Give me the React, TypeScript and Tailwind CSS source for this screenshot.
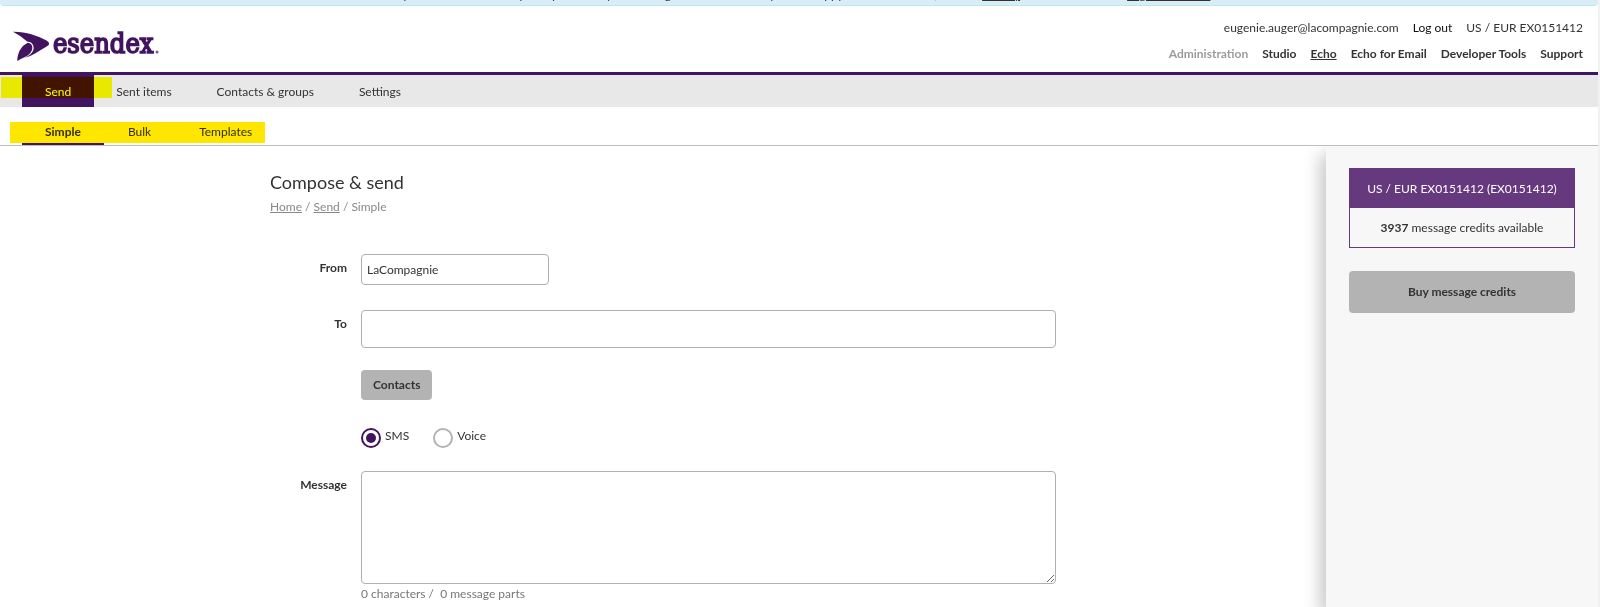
import { useState } from "react";

const accountLinks = [
  { label: "Administration", className: "text-[#9b9b9b]" },
  { label: "Studio", className: "" },
  { label: "Echo", className: "underline" },
  { label: "Echo for Email", className: "" },
  { label: "Developer Tools", className: "" },
  { label: "Support", className: "" },
];

function Logo() {
  return (
    <a href="#" aria-label="esendex" className="block">
      <svg width="148" height="36" viewBox="0 0 148 36" fill="#42145f">
        <path d="M0 1.700C13 1.500 24 5.500 33.500 10.500Q38.500 13.500 34 16.300L22 23.500Q17 26.500 11.500 28C18 25 21.500 21 20.500 16.500C19.800 13.500 17.500 11.500 14.500 11.800Q8.500 6 0 1.700Z" />
        <path d="M14.800 12.700C18 13 19.500 15.500 19.300 18C19 22 16.500 24.500 13 26.500Q7.500 29 4.300 31C4.300 25 6.500 16.500 14.800 12.700Z" />
        <text
          x="40"
          y="23"
          fontSize="27"
          stroke="#42145f"
          strokeWidth="1.600"
          fontFamily="'DejaVu Serif Condensed', 'DejaVu Serif', serif"
        >
          esendex
        </text>
        <circle cx="144" cy="22" r="1.500" opacity="0.7" />
      </svg>
    </a>
  );
}

function Header() {
  return (
    <header className="flex justify-between border-b-3 border-[#42145f] pl-[13px] pr-[15px]">
      <div className="pt-[24px]">
        <Logo />
      </div>
      <div className="flex flex-col items-end pt-[12px] pb-[8px]">
        <div className="flex h-[26px] gap-[14px] leading-[20px]">
          <span>eugenie.auger@lacompagnie.com</span>
          <a href="#" className="text-[#111]">Log out</a>
          <span>US / EUR EX0151412</span>
        </div>
        <nav className="flex gap-[14px] font-bold leading-[20px]">
          {accountLinks.map((link) => (
            <a key={link.label} href="#" className={link.className}>
              {link.label}
            </a>
          ))}
        </nav>
      </div>
    </header>
  );
}

function MainNav() {
  return (
    <nav className="relative flex h-[32px] bg-[#e8e8e8] pl-[22px] leading-[34px]">
      <a href="#" className="bg-[#42145f] px-[23px] text-white">Send</a>
      <a href="#" className="px-[22px]">Sent items</a>
      <a href="#" className="px-[23px]">Contacts &amp; groups</a>
      <a href="#" className="px-[22px]">Settings</a>
      <div className="absolute left-px top-[2px] h-[21px] w-[111px] bg-[#ffff00] mix-blend-multiply" />
    </nav>
  );
}

function SubNav() {
  return (
    <nav className="relative flex h-[39px] border-b border-[#bdbdbd] pl-[22px] pt-[10px] leading-[30px]">
      <a href="#" className="h-[28px] border-b-2 border-[#42145f] px-[23px] font-bold">Simple</a>
      <a href="#" className="px-[24px]">Bulk</a>
      <a href="#" className="px-[24px]">Templates</a>
      <div className="absolute left-[10px] top-[15px] h-[21px] w-[255px] bg-[#ffe600] mix-blend-multiply" />
    </nav>
  );
}

function Sidebar() {
  return (
    <aside className="w-[272px] shrink-0 bg-[#f7f7f7] px-[23px] pt-[22px] shadow-[-6px_8px_16px_rgba(0,0,0,0.22)]">
      <div className="border border-[#66397f] text-center">
        <div className="bg-[#66397f] leading-[39px] text-white">US / EUR EX0151412 (EX0151412)</div>
        <div className="leading-[39px]">
          <strong>3937</strong> message credits available
        </div>
      </div>
      <button className="mt-[23px] h-[42px] w-full rounded bg-[#b3b3b3] font-bold">
        Buy message credits
      </button>
    </aside>
  );
}

function ComposeForm() {
  const [from, setFrom] = useState("LaCompagnie");
  const [to, setTo] = useState("");
  const [type, setType] = useState("sms");
  const [message, setMessage] = useState("");

  const radio =
    "size-[20px] appearance-none rounded-full border-2 border-[#b3b3b3] p-[3px] checked:border-[#42145f] checked:bg-[#42145f] checked:bg-clip-content";
  const label = "text-right font-bold leading-[27px]";
  const field = "block rounded border border-[#b0b0b0] bg-white";

  return (
    <form className="grid grid-cols-[77px_1fr] gap-x-[14px] pt-[38px]">
      <label htmlFor="from" className={label}>From</label>
      <div className="h-[56px]">
        <input
          id="from"
          value={from}
          onChange={(e) => setFrom(e.target.value)}
          className={`${field} h-[31px] w-[188px] px-[5px]`}
        />
      </div>

      <label htmlFor="to" className={label}>To</label>
      <div>
        <input
          id="to"
          value={to}
          onChange={(e) => setTo(e.target.value)}
          className={`${field} h-[38px] w-full px-[5px]`}
        />
        <button type="button" className="mt-[22px] block h-[30px] rounded bg-[#b3b3b3] px-[12px] font-bold">
          Contacts
        </button>
        <div className="mt-[28px] flex h-[43px] gap-[24px]">
          <label className="flex items-start gap-[4px] leading-[16px]">
            <input type="radio" name="type" className={radio} checked={type === "sms"} onChange={() => setType("sms")} />
            SMS
          </label>
          <label className="flex items-start gap-[4px] leading-[16px]">
            <input type="radio" name="type" className={radio} checked={type === "voice"} onChange={() => setType("voice")} />
            Voice
          </label>
        </div>
      </div>

      <label htmlFor="message" className={label}>Message</label>
      <div>
        <textarea
          id="message"
          value={message}
          onChange={(e) => setMessage(e.target.value)}
          className={`${field} h-[113px] w-full p-[5px]`}
        />
        <p className="leading-[20px] text-[#777]">
          {message.length} characters /&nbsp; {Math.ceil(message.length / 160)} message parts
        </p>
      </div>
    </form>
  );
}

export default function App() {
  return (
    <div className="flex min-h-screen flex-col border-r-2 border-[#f1f1f1] bg-white font-['Lato',sans-serif] text-[12px] text-[#333]">
      {/* notice bar, scrolled almost out of view */}
      <div className="flex h-[6px] shrink-0 items-end justify-center overflow-hidden rounded-b border-b border-[#bce8f1] bg-[#d9edf7] pr-[40px]">
        <p className="h-[20px] whitespace-nowrap leading-[20px]">
          We have updated our terms and privacy notice. By continuing to use the service you are happy with these terms, see our <a href="#" className="underline">Privacy</a> notice and the new <a href="#" className="underline">Legal statement</a>
        </p>
      </div>
      <Header />
      <MainNav />
      <SubNav />
      <div className="flex grow overflow-hidden">
        <main className="grow">
          <div className="mx-auto w-[786px] pt-[21px]">
            <h1 className="text-[18px] leading-[31px]">Compose &amp; send</h1>
            <p className="leading-[18px] text-[#888]">
              <a href="#" className="underline">Home</a> / <a href="#" className="underline">Send</a> / Simple
            </p>
            <ComposeForm />
          </div>
        </main>
        <Sidebar />
      </div>
    </div>
  );
}
